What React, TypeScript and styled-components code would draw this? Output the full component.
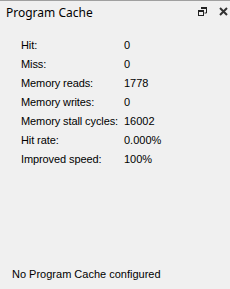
import styled, { createGlobalStyle } from "styled-components";

const GlobalStyle = createGlobalStyle`
  html, body {
    margin: 0;
    padding: 0;
    background: #f0f0f0;
  }
`;

const stats = [
  { label: "Hit:", value: "0" },
  { label: "Miss:", value: "0" },
  { label: "Memory reads:", value: "1778" },
  { label: "Memory writes:", value: "0" },
  { label: "Memory stall cycles:", value: "16002" },
  { label: "Hit rate:", value: "0.000%" },
  { label: "Improved speed:", value: "100%" },
];

function App() {
  return (
    <>
      <GlobalStyle />
      <Panel>
        <Header>
          <Title>Program Cache</Title>
          <Buttons>
            <IconButton>
              <svg width="9" height="9" viewBox="0 0 9 9">
                <path d="M3 0.5h5.5v5.5h-2" fill="none" stroke="#222" strokeWidth="1" />
                <rect x="3" y="0" width="6" height="2" fill="#222" />
                <rect x="0.5" y="3.5" width="5" height="5" fill="none" stroke="#222" strokeWidth="1" />
                <rect x="0" y="3" width="6" height="2" fill="#222" />
              </svg>
            </IconButton>
            <IconButton>
              <svg width="9" height="9" viewBox="0 0 9 9">
                <path d="M1 1L8 8M8 1L1 8" stroke="#333" strokeWidth="2" />
              </svg>
            </IconButton>
          </Buttons>
        </Header>
        <StatList>
          {stats.map((item) => (
            <StatRow key={item.label}>
              <StatLabel>{item.label}</StatLabel>
              <StatValue>{item.value}</StatValue>
            </StatRow>
          ))}
        </StatList>
        <Footer>No Program Cache configured</Footer>
      </Panel>
    </>
  );
}

const Panel = styled.div`
  width: 230px;
  height: 289px;
  box-sizing: border-box;
  border-top: 1px solid #a0a0a0;
  display: flex;
  flex-direction: column;
  background: #f0f0f0;
  color: #000;
  font-family: "Liberation Sans", Arial, sans-serif;
`;

const Header = styled.div`
  height: 24px;
  display: flex;
  flex-direction: row;
  align-items: center;
  padding: 0 0 0 6px;
`;

const Title = styled.span`
  flex: 1;
  font-family: "Noto Sans", "Liberation Sans", sans-serif;
  font-size: 12px;
  line-height: 24px;
`;

const Buttons = styled.div`
  display: flex;
  flex-direction: row;
  gap: 7px;
  margin-top: -3px;
`;

const IconButton = styled.div`
  width: 14px;
  height: 14px;
  display: flex;
  align-items: center;
  justify-content: center;
`;

const StatList = styled.div`
  display: flex;
  flex-direction: column;
  padding: 11px 0 0 21px;
`;

const StatRow = styled.div`
  display: flex;
  flex-direction: row;
  height: 19px;
  line-height: 19px;
  font-size: 11px;
`;

const StatLabel = styled.span`
  width: 103px;
  letter-spacing: -0.1px;
`;

const StatValue = styled.span``;

const Footer = styled.div`
  margin-top: auto;
  padding: 0 0 5px 12px;
  font-size: 11px;
  line-height: 19px;
`;

export default App;
